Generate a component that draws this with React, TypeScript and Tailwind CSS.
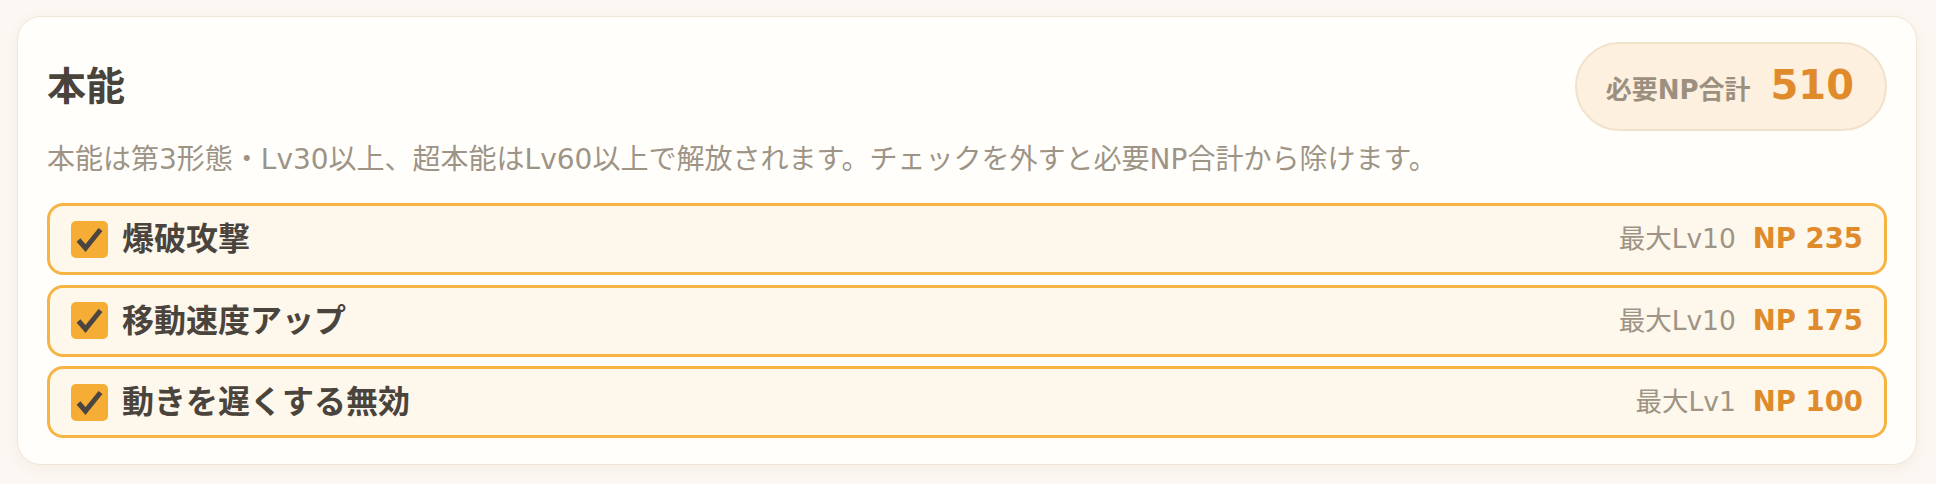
import { useState } from 'react'

type Instinct = {
  id: string
  name: string
  maxLv: number
  np: number
}

const instincts: Instinct[] = [
  { id: 'blast', name: '爆破攻撃', maxLv: 10, np: 235 },
  { id: 'speed', name: '移動速度アップ', maxLv: 10, np: 175 },
  { id: 'slow', name: '動きを遅くする無効', maxLv: 1, np: 100 },
]

function CheckBox({ checked }: { checked: boolean }) {
  return (
    <span className="flex h-[37px] w-[37px] shrink-0 items-center justify-center rounded-[5px] bg-[#f6ad35]">
      {checked && (
        <svg viewBox="0 0 37 37" className="h-[37px] w-[37px]">
          <path
            d="M7.5 19 L14.5 27 L29.5 8.5"
            fill="none"
            stroke="#4a4540"
            strokeWidth="5"
            strokeLinejoin="miter"
          />
        </svg>
      )}
    </span>
  )
}

export default function App() {
  const [checked, setChecked] = useState<Record<string, boolean>>({
    blast: true,
    speed: true,
    slow: true,
  })

  const total = instincts.reduce((sum, i) => (checked[i.id] ? sum + i.np : sum), 0)

  return (
    <div className="min-h-screen bg-[#fbf7f2] pt-4 pr-[19px] pb-[19px] pl-[17px] font-['DejaVu_Sans','Noto_Sans_CJK_JP',sans-serif]">
      <section className="rounded-[24px] border border-[#f0e6d6] bg-[#fffefb] px-[29px] pt-[25px] pb-[26px] shadow-[0_4px_14px_rgba(150,110,50,0.07)]">
        <div className="flex items-center justify-between">
          <h2 className="text-[39px] leading-none font-bold text-[#4a433b]">本能</h2>
          <div className="flex h-[89px] items-baseline gap-[20px] rounded-full border-2 border-[#f0e2cb] bg-[#fdf0df] pt-[21px] pr-[31px] pl-[29px]">
            <span className="text-[26px] leading-none font-bold text-[#9b9080]">必要NP合計</span>
            <span className="text-[40px] leading-none font-bold text-[#e08b2b]">{total}</span>
          </div>
        </div>

        <p className="mt-[8px] text-[28px] leading-[42px] text-[#9d9486]">
          本能は第3形態・Lv30以上、超本能はLv60以上で解放されます。チェックを外すと必要NP合計から除けます。
        </p>

        <ul className="mt-[22px] flex flex-col gap-[9.5px]">
          {instincts.map((item) => (
            <li key={item.id}>
              <label
                className="flex h-[72px] cursor-pointer items-center gap-[14px] rounded-2xl border-[3px] border-[#f6b444] bg-[#fef7ec] pr-[21px] pl-[21px]"
                onClick={() => setChecked((c) => ({ ...c, [item.id]: !c[item.id] }))}
              >
                <CheckBox checked={checked[item.id]} />
                <span className="flex-1 text-[32px] leading-none font-bold text-[#4a443c]">
                  {item.name}
                </span>
                <span className="flex items-baseline gap-[17px]">
                  <span className="text-[26.5px] leading-none text-[#9d9486]">最大Lv{item.maxLv}</span>
                  <span className="text-[27.5px] leading-none font-bold text-[#e08b2b]">NP {item.np}</span>
                </span>
              </label>
            </li>
          ))}
        </ul>
      </section>
    </div>
  )
}
